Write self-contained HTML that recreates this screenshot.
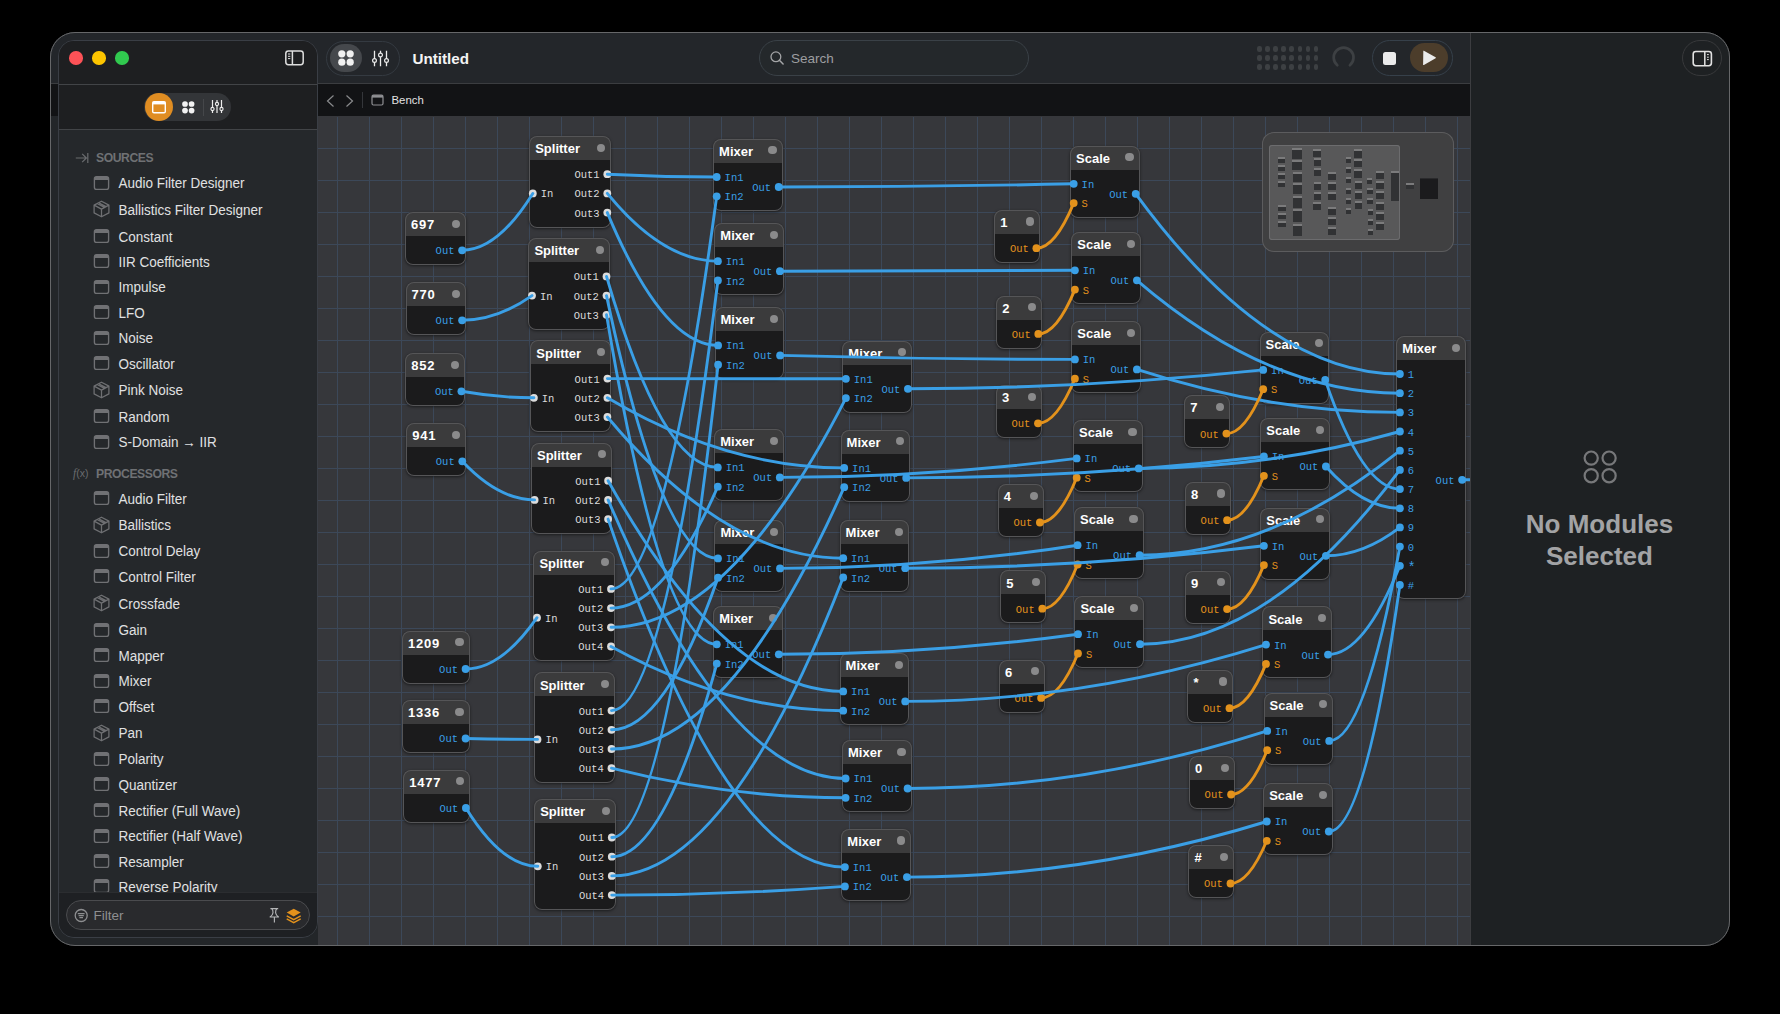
<!DOCTYPE html>
<html><head><meta charset="utf-8"><style>
*{margin:0;padding:0;box-sizing:border-box}
html,body{width:1780px;height:1014px;background:#000;overflow:hidden;font-family:"Liberation Sans",sans-serif}
.abs{position:absolute}
#win{position:absolute;left:50px;top:32px;width:1680px;height:913.5px;border-radius:25px;background:#232629;overflow:hidden}
#tb{position:absolute;left:0px;top:0px;width:1420px;height:52px;background:#23262a;border-bottom:1px solid #3b3d40}
#bc{position:absolute;left:0px;top:52px;width:1420px;height:32px;background:#121315}
#cv{position:absolute;left:318px;top:116px;width:1152px;height:829px;background-color:#36373b;overflow:hidden}
#grid{position:absolute;left:0;top:1px;width:1152px;height:828px;background-image:linear-gradient(to right,#3c4859 1px,transparent 1px),linear-gradient(to bottom,#3c4859 1px,transparent 1px);background-size:32px 32px;background-position:19px 31px}
#rp{position:absolute;left:1470px;top:32px;width:260px;height:913.5px;background:#1e2123;border-left:1px solid #3c3d40;border-top-right-radius:25px;border-bottom-right-radius:25px}
#frame{position:absolute;left:50px;top:32px;width:1680px;height:913.5px;border-radius:25px;border:1px solid #666769;pointer-events:none}
#sb{position:absolute;left:58px;top:40px;width:260px;height:897.5px;border-radius:16px;background:#25282b;border:1px solid #3a3e45;overflow:hidden}
#sbtop{position:absolute;left:0;top:0;width:100%;height:88px;background:#1e1f21}
.line{position:absolute;height:1px;background:#424447}
.tl{position:absolute;width:13.5px;height:13.5px;border-radius:50%;top:51.2px}
.it{position:absolute;left:94px;height:16px;width:215px;color:#e0e1e2;font-size:13.5px;line-height:16px;white-space:nowrap}
.it .ic{position:absolute;left:-1.2px}
.it span{position:absolute;left:24.5px;top:0;transform:scaleY(1.07);transform-origin:0 12.5px}
.sh{position:absolute;left:96px;color:#6f7174;font-size:12.2px;font-weight:bold;line-height:14px;letter-spacing:-0.45px}
.nd{position:absolute;border-radius:8px;background:#1b1b1c;box-shadow:0 1px 3px rgba(0,0,0,.5)}
.nd::after{content:"";position:absolute;left:0;top:0;right:0;bottom:0;border-radius:8px;box-shadow:inset 0 0 0 1px #555557}
.nd .hd{position:absolute;left:0;top:0;right:0;height:24px;background:#3b3b3c;border-radius:8px 8px 0 0}
.nd .tt{position:absolute;left:6px;top:5.2px;color:#fff;font-weight:bold;font-size:13px;line-height:16px}
.nd .tt.num{letter-spacing:0.8px}
.nd .hd i{position:absolute;right:6px;top:7.5px;width:8.2px;height:8.2px;border-radius:50%;background:#8a8a8b}
.pl,.pr{position:absolute;font-family:"Liberation Mono",monospace;font-size:10.5px;line-height:12px;transform:scaleY(1.12)}
.blue{color:#3a9fe6}.orange{color:#e3921c}.w{color:#dcdcdc}
#wires{position:absolute;left:0;top:0}
#wires path{fill:none;stroke-width:2.9;stroke-linecap:round}
#mm{position:absolute;left:1262px;top:132px;width:192px;height:120px;border-radius:12px;background:#404041;box-shadow:inset 0 0 0 1px #5c5c5e}
#mmv{position:absolute;left:6.7px;top:13.4px;width:131.3px;height:95px;border-radius:3px;background:#585859;box-shadow:inset 0 0 0 1px #6c6c6e}
.mn{position:absolute;background:#313234;border-top:2px solid #7b7b7c}
.led{position:absolute;width:4.4px;height:6.8px;border-radius:2.2px;background:#3d4043}
</style></head><body>
<div id="win"><div id="tb"></div><div id="bc"></div></div>
<div id="cv"><div id="grid"></div>
<div class="nd" style="left:87.0px;top:96.0px;width:61.0px;height:53.0px"><div class="hd"><span class="tt num">697</span><i></i></div><span class="pr blue" style="right:11.5px;top:33.3px">Out</span></div>
<div class="nd" style="left:87.5px;top:166.0px;width:60.5px;height:53.0px"><div class="hd"><span class="tt num">770</span><i></i></div><span class="pr blue" style="right:11.5px;top:33.3px">Out</span></div>
<div class="nd" style="left:87.3px;top:237.0px;width:60.0px;height:53.0px"><div class="hd"><span class="tt num">852</span><i></i></div><span class="pr blue" style="right:11.5px;top:33.3px">Out</span></div>
<div class="nd" style="left:88.2px;top:307.0px;width:60.0px;height:53.0px"><div class="hd"><span class="tt num">941</span><i></i></div><span class="pr blue" style="right:11.5px;top:33.3px">Out</span></div>
<div class="nd" style="left:84.0px;top:514.7px;width:67.5px;height:53.0px"><div class="hd"><span class="tt num">1209</span><i></i></div><span class="pr blue" style="right:11.5px;top:33.3px">Out</span></div>
<div class="nd" style="left:84.0px;top:584.2px;width:67.5px;height:53.0px"><div class="hd"><span class="tt num">1336</span><i></i></div><span class="pr blue" style="right:11.5px;top:33.3px">Out</span></div>
<div class="nd" style="left:85.2px;top:653.7px;width:66.6px;height:53.0px"><div class="hd"><span class="tt num">1477</span><i></i></div><span class="pr blue" style="right:11.5px;top:33.3px">Out</span></div>
<div class="nd" style="left:211.2px;top:20.0px;width:82.0px;height:91.6px"><div class="hd"><span class="tt">Splitter</span><i></i></div><span class="pl w" style="left:11.5px;top:52.4px">In</span><span class="pr w" style="right:11.5px;top:33.2px">Out1</span><span class="pr w" style="right:11.5px;top:52.4px">Out2</span><span class="pr w" style="right:11.5px;top:71.6px">Out3</span></div>
<div class="nd" style="left:210.4px;top:122.2px;width:82.0px;height:91.6px"><div class="hd"><span class="tt">Splitter</span><i></i></div><span class="pl w" style="left:11.5px;top:52.4px">In</span><span class="pr w" style="right:11.5px;top:33.2px">Out1</span><span class="pr w" style="right:11.5px;top:52.4px">Out2</span><span class="pr w" style="right:11.5px;top:71.6px">Out3</span></div>
<div class="nd" style="left:212.3px;top:224.4px;width:81.0px;height:91.6px"><div class="hd"><span class="tt">Splitter</span><i></i></div><span class="pl w" style="left:11.5px;top:52.4px">In</span><span class="pr w" style="right:11.5px;top:33.2px">Out1</span><span class="pr w" style="right:11.5px;top:52.4px">Out2</span><span class="pr w" style="right:11.5px;top:71.6px">Out3</span></div>
<div class="nd" style="left:213.0px;top:326.5px;width:81.0px;height:91.6px"><div class="hd"><span class="tt">Splitter</span><i></i></div><span class="pl w" style="left:11.5px;top:52.4px">In</span><span class="pr w" style="right:11.5px;top:33.2px">Out1</span><span class="pr w" style="right:11.5px;top:52.4px">Out2</span><span class="pr w" style="right:11.5px;top:71.6px">Out3</span></div>
<div class="nd" style="left:215.4px;top:434.7px;width:81.5px;height:110.8px"><div class="hd"><span class="tt">Splitter</span><i></i></div><span class="pl w" style="left:11.5px;top:62.0px">In</span><span class="pr w" style="right:11.5px;top:33.2px">Out1</span><span class="pr w" style="right:11.5px;top:52.4px">Out2</span><span class="pr w" style="right:11.5px;top:71.6px">Out3</span><span class="pr w" style="right:11.5px;top:90.8px">Out4</span></div>
<div class="nd" style="left:215.9px;top:556.4px;width:81.5px;height:110.8px"><div class="hd"><span class="tt">Splitter</span><i></i></div><span class="pl w" style="left:11.5px;top:62.0px">In</span><span class="pr w" style="right:11.5px;top:33.2px">Out1</span><span class="pr w" style="right:11.5px;top:52.4px">Out2</span><span class="pr w" style="right:11.5px;top:71.6px">Out3</span><span class="pr w" style="right:11.5px;top:90.8px">Out4</span></div>
<div class="nd" style="left:216.2px;top:683.3px;width:81.5px;height:110.8px"><div class="hd"><span class="tt">Splitter</span><i></i></div><span class="pl w" style="left:11.5px;top:62.0px">In</span><span class="pr w" style="right:11.5px;top:33.2px">Out1</span><span class="pr w" style="right:11.5px;top:52.4px">Out2</span><span class="pr w" style="right:11.5px;top:71.6px">Out3</span><span class="pr w" style="right:11.5px;top:90.8px">Out4</span></div>
<div class="nd" style="left:395.1px;top:22.8px;width:69.5px;height:72.0px"><div class="hd"><span class="tt">Mixer</span><i></i></div><span class="pl blue" style="left:11.5px;top:33.2px">In1</span><span class="pl blue" style="left:11.5px;top:52.5px">In2</span><span class="pr blue" style="right:11.5px;top:43.2px">Out</span></div>
<div class="nd" style="left:396.3px;top:107.0px;width:69.5px;height:72.0px"><div class="hd"><span class="tt">Mixer</span><i></i></div><span class="pl blue" style="left:11.5px;top:33.2px">In1</span><span class="pl blue" style="left:11.5px;top:52.5px">In2</span><span class="pr blue" style="right:11.5px;top:43.2px">Out</span></div>
<div class="nd" style="left:396.5px;top:191.2px;width:69.5px;height:72.0px"><div class="hd"><span class="tt">Mixer</span><i></i></div><span class="pl blue" style="left:11.5px;top:33.2px">In1</span><span class="pl blue" style="left:11.5px;top:52.5px">In2</span><span class="pr blue" style="right:11.5px;top:43.2px">Out</span></div>
<div class="nd" style="left:396.2px;top:313.2px;width:69.5px;height:72.0px"><div class="hd"><span class="tt">Mixer</span><i></i></div><span class="pl blue" style="left:11.5px;top:33.2px">In1</span><span class="pl blue" style="left:11.5px;top:52.5px">In2</span><span class="pr blue" style="right:11.5px;top:43.2px">Out</span></div>
<div class="nd" style="left:396.4px;top:404.2px;width:69.5px;height:72.0px"><div class="hd"><span class="tt">Mixer</span><i></i></div><span class="pl blue" style="left:11.5px;top:33.2px">In1</span><span class="pl blue" style="left:11.5px;top:52.5px">In2</span><span class="pr blue" style="right:11.5px;top:43.2px">Out</span></div>
<div class="nd" style="left:395.2px;top:490.1px;width:69.5px;height:72.0px"><div class="hd"><span class="tt">Mixer</span><i></i></div><span class="pl blue" style="left:11.5px;top:33.2px">In1</span><span class="pl blue" style="left:11.5px;top:52.5px">In2</span><span class="pr blue" style="right:11.5px;top:43.2px">Out</span></div>
<div class="nd" style="left:524.3px;top:224.6px;width:69.5px;height:72.0px"><div class="hd"><span class="tt">Mixer</span><i></i></div><span class="pl blue" style="left:11.5px;top:33.2px">In1</span><span class="pl blue" style="left:11.5px;top:52.5px">In2</span><span class="pr blue" style="right:11.5px;top:43.2px">Out</span></div>
<div class="nd" style="left:522.6px;top:313.7px;width:69.5px;height:72.0px"><div class="hd"><span class="tt">Mixer</span><i></i></div><span class="pl blue" style="left:11.5px;top:33.2px">In1</span><span class="pl blue" style="left:11.5px;top:52.5px">In2</span><span class="pr blue" style="right:11.5px;top:43.2px">Out</span></div>
<div class="nd" style="left:521.6px;top:404.0px;width:69.5px;height:72.0px"><div class="hd"><span class="tt">Mixer</span><i></i></div><span class="pl blue" style="left:11.5px;top:33.2px">In1</span><span class="pl blue" style="left:11.5px;top:52.5px">In2</span><span class="pr blue" style="right:11.5px;top:43.2px">Out</span></div>
<div class="nd" style="left:521.6px;top:537.2px;width:69.5px;height:72.0px"><div class="hd"><span class="tt">Mixer</span><i></i></div><span class="pl blue" style="left:11.5px;top:33.2px">In1</span><span class="pl blue" style="left:11.5px;top:52.5px">In2</span><span class="pr blue" style="right:11.5px;top:43.2px">Out</span></div>
<div class="nd" style="left:524.0px;top:624.3px;width:69.5px;height:72.0px"><div class="hd"><span class="tt">Mixer</span><i></i></div><span class="pl blue" style="left:11.5px;top:33.2px">In1</span><span class="pl blue" style="left:11.5px;top:52.5px">In2</span><span class="pr blue" style="right:11.5px;top:43.2px">Out</span></div>
<div class="nd" style="left:523.3px;top:712.9px;width:69.5px;height:72.0px"><div class="hd"><span class="tt">Mixer</span><i></i></div><span class="pl blue" style="left:11.5px;top:33.2px">In1</span><span class="pl blue" style="left:11.5px;top:52.5px">In2</span><span class="pr blue" style="right:11.5px;top:43.2px">Out</span></div>
<div class="nd" style="left:676.3px;top:93.9px;width:46.0px;height:53.0px"><div class="hd"><span class="tt">1</span><i></i></div><span class="pr orange" style="right:11.5px;top:33.3px">Out</span></div>
<div class="nd" style="left:678.2px;top:179.6px;width:46.0px;height:53.0px"><div class="hd"><span class="tt">2</span><i></i></div><span class="pr orange" style="right:11.5px;top:33.3px">Out</span></div>
<div class="nd" style="left:677.9px;top:269.0px;width:46.0px;height:53.0px"><div class="hd"><span class="tt">3</span><i></i></div><span class="pr orange" style="right:11.5px;top:33.3px">Out</span></div>
<div class="nd" style="left:679.8px;top:368.2px;width:46.0px;height:53.0px"><div class="hd"><span class="tt">4</span><i></i></div><span class="pr orange" style="right:11.5px;top:33.3px">Out</span></div>
<div class="nd" style="left:682.2px;top:454.4px;width:46.0px;height:53.0px"><div class="hd"><span class="tt">5</span><i></i></div><span class="pr orange" style="right:11.5px;top:33.3px">Out</span></div>
<div class="nd" style="left:681.0px;top:543.6px;width:46.0px;height:53.0px"><div class="hd"><span class="tt">6</span><i></i></div><span class="pr orange" style="right:11.5px;top:33.3px">Out</span></div>
<div class="nd" style="left:866.3px;top:279.3px;width:46.0px;height:53.0px"><div class="hd"><span class="tt">7</span><i></i></div><span class="pr orange" style="right:11.5px;top:33.3px">Out</span></div>
<div class="nd" style="left:867.0px;top:365.9px;width:46.0px;height:53.0px"><div class="hd"><span class="tt">8</span><i></i></div><span class="pr orange" style="right:11.5px;top:33.3px">Out</span></div>
<div class="nd" style="left:867.0px;top:454.8px;width:46.0px;height:53.0px"><div class="hd"><span class="tt">9</span><i></i></div><span class="pr orange" style="right:11.5px;top:33.3px">Out</span></div>
<div class="nd" style="left:869.4px;top:553.9px;width:46.0px;height:53.0px"><div class="hd"><span class="tt">*</span><i></i></div><span class="pr orange" style="right:11.5px;top:33.3px">Out</span></div>
<div class="nd" style="left:871.0px;top:640.2px;width:46.0px;height:53.0px"><div class="hd"><span class="tt">0</span><i></i></div><span class="pr orange" style="right:11.5px;top:33.3px">Out</span></div>
<div class="nd" style="left:870.4px;top:729.2px;width:46.0px;height:53.0px"><div class="hd"><span class="tt">#</span><i></i></div><span class="pr orange" style="right:11.5px;top:33.3px">Out</span></div>
<div class="nd" style="left:752.1px;top:29.6px;width:69.5px;height:72.0px"><div class="hd"><span class="tt">Scale</span><i></i></div><span class="pl blue" style="left:11.5px;top:33.2px">In</span><span class="pl orange" style="left:11.5px;top:52.5px">S</span><span class="pr blue" style="right:11.5px;top:43.2px">Out</span></div>
<div class="nd" style="left:753.3px;top:116.1px;width:69.5px;height:72.0px"><div class="hd"><span class="tt">Scale</span><i></i></div><span class="pl blue" style="left:11.5px;top:33.2px">In</span><span class="pl orange" style="left:11.5px;top:52.5px">S</span><span class="pr blue" style="right:11.5px;top:43.2px">Out</span></div>
<div class="nd" style="left:753.3px;top:205.2px;width:69.5px;height:72.0px"><div class="hd"><span class="tt">Scale</span><i></i></div><span class="pl blue" style="left:11.5px;top:33.2px">In</span><span class="pl orange" style="left:11.5px;top:52.5px">S</span><span class="pr blue" style="right:11.5px;top:43.2px">Out</span></div>
<div class="nd" style="left:755.1px;top:304.2px;width:69.5px;height:72.0px"><div class="hd"><span class="tt">Scale</span><i></i></div><span class="pl blue" style="left:11.5px;top:33.2px">In</span><span class="pl orange" style="left:11.5px;top:52.5px">S</span><span class="pr blue" style="right:11.5px;top:43.2px">Out</span></div>
<div class="nd" style="left:756.0px;top:391.0px;width:69.5px;height:72.0px"><div class="hd"><span class="tt">Scale</span><i></i></div><span class="pl blue" style="left:11.5px;top:33.2px">In</span><span class="pl orange" style="left:11.5px;top:52.5px">S</span><span class="pr blue" style="right:11.5px;top:43.2px">Out</span></div>
<div class="nd" style="left:756.4px;top:480.0px;width:69.5px;height:72.0px"><div class="hd"><span class="tt">Scale</span><i></i></div><span class="pl blue" style="left:11.5px;top:33.2px">In</span><span class="pl orange" style="left:11.5px;top:52.5px">S</span><span class="pr blue" style="right:11.5px;top:43.2px">Out</span></div>
<div class="nd" style="left:941.6px;top:215.7px;width:69.5px;height:72.0px"><div class="hd"><span class="tt">Scale</span><i></i></div><span class="pl blue" style="left:11.5px;top:33.2px">In</span><span class="pl orange" style="left:11.5px;top:52.5px">S</span><span class="pr blue" style="right:11.5px;top:43.2px">Out</span></div>
<div class="nd" style="left:942.3px;top:302.3px;width:69.5px;height:72.0px"><div class="hd"><span class="tt">Scale</span><i></i></div><span class="pl blue" style="left:11.5px;top:33.2px">In</span><span class="pl orange" style="left:11.5px;top:52.5px">S</span><span class="pr blue" style="right:11.5px;top:43.2px">Out</span></div>
<div class="nd" style="left:942.3px;top:391.6px;width:69.5px;height:72.0px"><div class="hd"><span class="tt">Scale</span><i></i></div><span class="pl blue" style="left:11.5px;top:33.2px">In</span><span class="pl orange" style="left:11.5px;top:52.5px">S</span><span class="pr blue" style="right:11.5px;top:43.2px">Out</span></div>
<div class="nd" style="left:944.4px;top:490.4px;width:69.5px;height:72.0px"><div class="hd"><span class="tt">Scale</span><i></i></div><span class="pl blue" style="left:11.5px;top:33.2px">In</span><span class="pl orange" style="left:11.5px;top:52.5px">S</span><span class="pr blue" style="right:11.5px;top:43.2px">Out</span></div>
<div class="nd" style="left:945.6px;top:576.7px;width:69.5px;height:72.0px"><div class="hd"><span class="tt">Scale</span><i></i></div><span class="pl blue" style="left:11.5px;top:33.2px">In</span><span class="pl orange" style="left:11.5px;top:52.5px">S</span><span class="pr blue" style="right:11.5px;top:43.2px">Out</span></div>
<div class="nd" style="left:945.2px;top:667.3px;width:69.5px;height:72.0px"><div class="hd"><span class="tt">Scale</span><i></i></div><span class="pl blue" style="left:11.5px;top:33.2px">In</span><span class="pl orange" style="left:11.5px;top:52.5px">S</span><span class="pr blue" style="right:11.5px;top:43.2px">Out</span></div>
<div class="nd" style="left:1078.3px;top:220.0px;width:69.7px;height:263.0px"><div class="hd"><span class="tt">Mixer</span><i></i></div><span class="pl blue" style="left:11.5px;top:33.0px">1</span><span class="pl blue" style="left:11.5px;top:52.2px">2</span><span class="pl blue" style="left:11.5px;top:71.4px">3</span><span class="pl blue" style="left:11.5px;top:90.5px">4</span><span class="pl blue" style="left:11.5px;top:109.7px">5</span><span class="pl blue" style="left:11.5px;top:128.9px">6</span><span class="pl blue" style="left:11.5px;top:148.1px">7</span><span class="pl blue" style="left:11.5px;top:167.3px">8</span><span class="pl blue" style="left:11.5px;top:186.4px">9</span><span class="pl blue" style="left:11.5px;top:205.6px">0</span><span class="pl blue" style="left:11.5px;top:227.0px;font-size:13px">*</span><span class="pl blue" style="left:11.5px;top:244.0px">#</span><span class="pr blue" style="right:11.5px;top:138.8px">Out</span></div>
<svg id="wires" width="1152" height="829">
<circle cx="144.1" cy="134.3" r="3.9" fill="#3a9fe6"/>
<circle cx="144.1" cy="204.3" r="3.9" fill="#3a9fe6"/>
<circle cx="143.4" cy="275.3" r="3.9" fill="#3a9fe6"/>
<circle cx="144.3" cy="345.3" r="3.9" fill="#3a9fe6"/>
<circle cx="147.6" cy="553.0" r="3.9" fill="#3a9fe6"/>
<circle cx="147.6" cy="622.5" r="3.9" fill="#3a9fe6"/>
<circle cx="147.9" cy="692.0" r="3.9" fill="#3a9fe6"/>
<circle cx="214.8" cy="77.4" r="3.9" fill="#dcdcdc"/>
<circle cx="289.3" cy="58.2" r="3.9" fill="#dcdcdc"/>
<circle cx="289.3" cy="77.4" r="3.9" fill="#dcdcdc"/>
<circle cx="289.3" cy="96.6" r="3.9" fill="#dcdcdc"/>
<circle cx="214.0" cy="179.6" r="3.9" fill="#dcdcdc"/>
<circle cx="288.5" cy="160.4" r="3.9" fill="#dcdcdc"/>
<circle cx="288.5" cy="179.6" r="3.9" fill="#dcdcdc"/>
<circle cx="288.5" cy="198.8" r="3.9" fill="#dcdcdc"/>
<circle cx="215.9" cy="281.8" r="3.9" fill="#dcdcdc"/>
<circle cx="289.4" cy="262.6" r="3.9" fill="#dcdcdc"/>
<circle cx="289.4" cy="281.8" r="3.9" fill="#dcdcdc"/>
<circle cx="289.4" cy="301.0" r="3.9" fill="#dcdcdc"/>
<circle cx="216.6" cy="383.9" r="3.9" fill="#dcdcdc"/>
<circle cx="290.1" cy="364.7" r="3.9" fill="#dcdcdc"/>
<circle cx="290.1" cy="383.9" r="3.9" fill="#dcdcdc"/>
<circle cx="290.1" cy="403.1" r="3.9" fill="#dcdcdc"/>
<circle cx="219.0" cy="501.7" r="3.9" fill="#dcdcdc"/>
<circle cx="293.0" cy="472.9" r="3.9" fill="#dcdcdc"/>
<circle cx="293.0" cy="492.1" r="3.9" fill="#dcdcdc"/>
<circle cx="293.0" cy="511.3" r="3.9" fill="#dcdcdc"/>
<circle cx="293.0" cy="530.5" r="3.9" fill="#dcdcdc"/>
<circle cx="219.5" cy="623.4" r="3.9" fill="#dcdcdc"/>
<circle cx="293.5" cy="594.6" r="3.9" fill="#dcdcdc"/>
<circle cx="293.5" cy="613.8" r="3.9" fill="#dcdcdc"/>
<circle cx="293.5" cy="633.0" r="3.9" fill="#dcdcdc"/>
<circle cx="293.5" cy="652.2" r="3.9" fill="#dcdcdc"/>
<circle cx="219.8" cy="750.3" r="3.9" fill="#dcdcdc"/>
<circle cx="293.8" cy="721.5" r="3.9" fill="#dcdcdc"/>
<circle cx="293.8" cy="740.7" r="3.9" fill="#dcdcdc"/>
<circle cx="293.8" cy="759.9" r="3.9" fill="#dcdcdc"/>
<circle cx="293.8" cy="779.1" r="3.9" fill="#dcdcdc"/>
<circle cx="398.7" cy="61.0" r="3.9" fill="#3a9fe6"/>
<circle cx="398.7" cy="80.3" r="3.9" fill="#3a9fe6"/>
<circle cx="460.7" cy="71.0" r="3.9" fill="#3a9fe6"/>
<circle cx="399.9" cy="145.2" r="3.9" fill="#3a9fe6"/>
<circle cx="399.9" cy="164.5" r="3.9" fill="#3a9fe6"/>
<circle cx="461.9" cy="155.2" r="3.9" fill="#3a9fe6"/>
<circle cx="400.1" cy="229.4" r="3.9" fill="#3a9fe6"/>
<circle cx="400.1" cy="248.7" r="3.9" fill="#3a9fe6"/>
<circle cx="462.1" cy="239.4" r="3.9" fill="#3a9fe6"/>
<circle cx="399.8" cy="351.4" r="3.9" fill="#3a9fe6"/>
<circle cx="399.8" cy="370.7" r="3.9" fill="#3a9fe6"/>
<circle cx="461.8" cy="361.4" r="3.9" fill="#3a9fe6"/>
<circle cx="400.0" cy="442.4" r="3.9" fill="#3a9fe6"/>
<circle cx="400.0" cy="461.7" r="3.9" fill="#3a9fe6"/>
<circle cx="462.0" cy="452.4" r="3.9" fill="#3a9fe6"/>
<circle cx="398.8" cy="528.3" r="3.9" fill="#3a9fe6"/>
<circle cx="398.8" cy="547.6" r="3.9" fill="#3a9fe6"/>
<circle cx="460.8" cy="538.3" r="3.9" fill="#3a9fe6"/>
<circle cx="527.9" cy="262.8" r="3.9" fill="#3a9fe6"/>
<circle cx="527.9" cy="282.1" r="3.9" fill="#3a9fe6"/>
<circle cx="589.9" cy="272.8" r="3.9" fill="#3a9fe6"/>
<circle cx="526.2" cy="351.9" r="3.9" fill="#3a9fe6"/>
<circle cx="526.2" cy="371.2" r="3.9" fill="#3a9fe6"/>
<circle cx="588.2" cy="361.9" r="3.9" fill="#3a9fe6"/>
<circle cx="525.2" cy="442.2" r="3.9" fill="#3a9fe6"/>
<circle cx="525.2" cy="461.5" r="3.9" fill="#3a9fe6"/>
<circle cx="587.2" cy="452.2" r="3.9" fill="#3a9fe6"/>
<circle cx="525.2" cy="575.4" r="3.9" fill="#3a9fe6"/>
<circle cx="525.2" cy="594.7" r="3.9" fill="#3a9fe6"/>
<circle cx="587.2" cy="585.4" r="3.9" fill="#3a9fe6"/>
<circle cx="527.6" cy="662.5" r="3.9" fill="#3a9fe6"/>
<circle cx="527.6" cy="681.8" r="3.9" fill="#3a9fe6"/>
<circle cx="589.6" cy="672.5" r="3.9" fill="#3a9fe6"/>
<circle cx="526.9" cy="751.1" r="3.9" fill="#3a9fe6"/>
<circle cx="526.9" cy="770.4" r="3.9" fill="#3a9fe6"/>
<circle cx="588.9" cy="761.1" r="3.9" fill="#3a9fe6"/>
<circle cx="718.4" cy="132.2" r="3.9" fill="#e3921c"/>
<circle cx="720.3" cy="217.9" r="3.9" fill="#e3921c"/>
<circle cx="720.0" cy="307.3" r="3.9" fill="#e3921c"/>
<circle cx="721.9" cy="406.5" r="3.9" fill="#e3921c"/>
<circle cx="724.3" cy="492.7" r="3.9" fill="#e3921c"/>
<circle cx="723.1" cy="581.9" r="3.9" fill="#e3921c"/>
<circle cx="908.4" cy="317.6" r="3.9" fill="#e3921c"/>
<circle cx="909.1" cy="404.2" r="3.9" fill="#e3921c"/>
<circle cx="909.1" cy="493.1" r="3.9" fill="#e3921c"/>
<circle cx="911.5" cy="592.2" r="3.9" fill="#e3921c"/>
<circle cx="913.1" cy="678.5" r="3.9" fill="#e3921c"/>
<circle cx="912.5" cy="767.5" r="3.9" fill="#e3921c"/>
<circle cx="755.7" cy="67.8" r="3.9" fill="#3a9fe6"/>
<circle cx="755.7" cy="87.1" r="3.9" fill="#e3921c"/>
<circle cx="817.7" cy="77.8" r="3.9" fill="#3a9fe6"/>
<circle cx="756.9" cy="154.3" r="3.9" fill="#3a9fe6"/>
<circle cx="756.9" cy="173.6" r="3.9" fill="#e3921c"/>
<circle cx="818.9" cy="164.3" r="3.9" fill="#3a9fe6"/>
<circle cx="756.9" cy="243.4" r="3.9" fill="#3a9fe6"/>
<circle cx="756.9" cy="262.7" r="3.9" fill="#e3921c"/>
<circle cx="818.9" cy="253.4" r="3.9" fill="#3a9fe6"/>
<circle cx="758.7" cy="342.4" r="3.9" fill="#3a9fe6"/>
<circle cx="758.7" cy="361.7" r="3.9" fill="#e3921c"/>
<circle cx="820.7" cy="352.4" r="3.9" fill="#3a9fe6"/>
<circle cx="759.6" cy="429.2" r="3.9" fill="#3a9fe6"/>
<circle cx="759.6" cy="448.5" r="3.9" fill="#e3921c"/>
<circle cx="821.6" cy="439.2" r="3.9" fill="#3a9fe6"/>
<circle cx="760.0" cy="518.2" r="3.9" fill="#3a9fe6"/>
<circle cx="760.0" cy="537.5" r="3.9" fill="#e3921c"/>
<circle cx="822.0" cy="528.2" r="3.9" fill="#3a9fe6"/>
<circle cx="945.2" cy="253.9" r="3.9" fill="#3a9fe6"/>
<circle cx="945.2" cy="273.2" r="3.9" fill="#e3921c"/>
<circle cx="1007.2" cy="263.9" r="3.9" fill="#3a9fe6"/>
<circle cx="945.9" cy="340.5" r="3.9" fill="#3a9fe6"/>
<circle cx="945.9" cy="359.8" r="3.9" fill="#e3921c"/>
<circle cx="1007.9" cy="350.5" r="3.9" fill="#3a9fe6"/>
<circle cx="945.9" cy="429.8" r="3.9" fill="#3a9fe6"/>
<circle cx="945.9" cy="449.1" r="3.9" fill="#e3921c"/>
<circle cx="1007.9" cy="439.8" r="3.9" fill="#3a9fe6"/>
<circle cx="948.0" cy="528.6" r="3.9" fill="#3a9fe6"/>
<circle cx="948.0" cy="547.9" r="3.9" fill="#e3921c"/>
<circle cx="1010.0" cy="538.6" r="3.9" fill="#3a9fe6"/>
<circle cx="949.2" cy="614.9" r="3.9" fill="#3a9fe6"/>
<circle cx="949.2" cy="634.2" r="3.9" fill="#e3921c"/>
<circle cx="1011.2" cy="624.9" r="3.9" fill="#3a9fe6"/>
<circle cx="948.8" cy="705.5" r="3.9" fill="#3a9fe6"/>
<circle cx="948.8" cy="724.8" r="3.9" fill="#e3921c"/>
<circle cx="1010.8" cy="715.5" r="3.9" fill="#3a9fe6"/>
<circle cx="1081.9" cy="258.0" r="3.9" fill="#3a9fe6"/>
<circle cx="1081.9" cy="277.2" r="3.9" fill="#3a9fe6"/>
<circle cx="1081.9" cy="296.4" r="3.9" fill="#3a9fe6"/>
<circle cx="1081.9" cy="315.5" r="3.9" fill="#3a9fe6"/>
<circle cx="1081.9" cy="334.7" r="3.9" fill="#3a9fe6"/>
<circle cx="1081.9" cy="353.9" r="3.9" fill="#3a9fe6"/>
<circle cx="1081.9" cy="373.1" r="3.9" fill="#3a9fe6"/>
<circle cx="1081.9" cy="392.3" r="3.9" fill="#3a9fe6"/>
<circle cx="1081.9" cy="411.4" r="3.9" fill="#3a9fe6"/>
<circle cx="1081.9" cy="430.6" r="3.9" fill="#3a9fe6"/>
<circle cx="1081.9" cy="449.8" r="3.9" fill="#3a9fe6"/>
<circle cx="1081.9" cy="469.0" r="3.9" fill="#3a9fe6"/>
<circle cx="1144.1" cy="363.8" r="3.9" fill="#3a9fe6"/>
<path d="M1144.5 363.8H1160" stroke="#3a9fe6"/>
<path d="M144.1 134.3Q179.5 134.3 214.8 77.4" stroke="#3a9fe6"/>
<path d="M144.1 204.3Q179.1 204.3 214.0 179.6" stroke="#3a9fe6"/>
<path d="M143.4 275.3Q179.6 281.8 215.9 281.8" stroke="#3a9fe6"/>
<path d="M144.3 345.3Q180.5 383.9 216.6 383.9" stroke="#3a9fe6"/>
<path d="M147.6 553.0Q183.3 553.0 219.0 501.7" stroke="#3a9fe6"/>
<path d="M147.6 622.5Q183.6 623.4 219.5 623.4" stroke="#3a9fe6"/>
<path d="M147.9 692.0Q183.9 750.3 219.8 750.3" stroke="#3a9fe6"/>
<path d="M289.3 58.2Q344.0 61.0 398.7 61.0" stroke="#3a9fe6"/>
<path d="M289.3 77.4Q344.6 145.2 399.9 145.2" stroke="#3a9fe6"/>
<path d="M289.3 96.6Q344.7 229.4 400.1 229.4" stroke="#3a9fe6"/>
<path d="M288.5 160.4Q344.2 351.4 399.8 351.4" stroke="#3a9fe6"/>
<path d="M288.5 179.6Q344.2 442.4 400.0 442.4" stroke="#3a9fe6"/>
<path d="M288.5 198.8Q343.7 528.3 398.8 528.3" stroke="#3a9fe6"/>
<path d="M289.4 262.6Q408.6 262.8 527.9 262.8" stroke="#3a9fe6"/>
<path d="M289.4 281.8Q407.8 351.9 526.2 351.9" stroke="#3a9fe6"/>
<path d="M289.4 301.0Q407.3 442.2 525.2 442.2" stroke="#3a9fe6"/>
<path d="M290.1 364.7Q407.7 575.4 525.2 575.4" stroke="#3a9fe6"/>
<path d="M290.1 383.9Q408.9 662.5 527.6 662.5" stroke="#3a9fe6"/>
<path d="M290.1 403.1Q408.5 751.1 526.9 751.1" stroke="#3a9fe6"/>
<path d="M293.0 472.9Q345.9 472.9 398.7 80.3" stroke="#3a9fe6"/>
<path d="M293.0 492.1Q346.4 492.1 399.8 370.7" stroke="#3a9fe6"/>
<path d="M293.0 511.3Q410.5 511.3 527.9 282.1" stroke="#3a9fe6"/>
<path d="M293.0 530.5Q409.1 594.7 525.2 594.7" stroke="#3a9fe6"/>
<path d="M293.5 594.6Q346.7 594.6 399.9 164.5" stroke="#3a9fe6"/>
<path d="M293.5 613.8Q346.8 613.8 400.0 461.7" stroke="#3a9fe6"/>
<path d="M293.5 633.0Q409.9 633.0 526.2 371.2" stroke="#3a9fe6"/>
<path d="M293.5 652.2Q410.5 681.8 527.6 681.8" stroke="#3a9fe6"/>
<path d="M293.8 721.5Q347.0 721.5 400.1 248.7" stroke="#3a9fe6"/>
<path d="M293.8 740.7Q346.3 740.7 398.8 547.6" stroke="#3a9fe6"/>
<path d="M293.8 759.9Q409.5 759.9 525.2 461.5" stroke="#3a9fe6"/>
<path d="M293.8 779.1Q410.4 779.1 526.9 770.4" stroke="#3a9fe6"/>
<path d="M460.7 71.0Q608.2 71.0 755.7 67.8" stroke="#3a9fe6"/>
<path d="M718.4 132.2Q737.0 132.2 755.7 87.1" stroke="#e3921c"/>
<path d="M817.7 77.8Q949.8 258.0 1081.9 258.0" stroke="#3a9fe6"/>
<path d="M461.9 155.2Q609.4 155.2 756.9 154.3" stroke="#3a9fe6"/>
<path d="M720.3 217.9Q738.6 217.9 756.9 173.6" stroke="#e3921c"/>
<path d="M818.9 164.3Q950.4 277.2 1081.9 277.2" stroke="#3a9fe6"/>
<path d="M462.1 239.4Q609.5 243.4 756.9 243.4" stroke="#3a9fe6"/>
<path d="M720.0 307.3Q738.4 307.3 756.9 262.7" stroke="#e3921c"/>
<path d="M818.9 253.4Q950.4 296.4 1081.9 296.4" stroke="#3a9fe6"/>
<path d="M461.8 361.4Q610.2 361.4 758.7 342.4" stroke="#3a9fe6"/>
<path d="M721.9 406.5Q740.3 406.5 758.7 361.7" stroke="#e3921c"/>
<path d="M820.7 352.4Q951.3 352.4 1081.9 315.5" stroke="#3a9fe6"/>
<path d="M462.0 452.4Q610.8 452.4 759.6 429.2" stroke="#3a9fe6"/>
<path d="M724.3 492.7Q741.9 492.7 759.6 448.5" stroke="#e3921c"/>
<path d="M821.6 439.2Q951.8 439.2 1081.9 334.7" stroke="#3a9fe6"/>
<path d="M460.8 538.3Q610.4 538.3 760.0 518.2" stroke="#3a9fe6"/>
<path d="M723.1 581.9Q741.5 581.9 760.0 537.5" stroke="#e3921c"/>
<path d="M822.0 528.2Q951.9 528.2 1081.9 353.9" stroke="#3a9fe6"/>
<path d="M589.9 272.8Q767.5 272.8 945.2 253.9" stroke="#3a9fe6"/>
<path d="M908.4 317.6Q926.8 317.6 945.2 273.2" stroke="#e3921c"/>
<path d="M1007.2 263.9Q1044.5 373.1 1081.9 373.1" stroke="#3a9fe6"/>
<path d="M588.2 361.9Q767.0 361.9 945.9 340.5" stroke="#3a9fe6"/>
<path d="M909.1 404.2Q927.5 404.2 945.9 359.8" stroke="#e3921c"/>
<path d="M1007.9 350.5Q1044.9 392.3 1081.9 392.3" stroke="#3a9fe6"/>
<path d="M587.2 452.2Q766.5 452.2 945.9 429.8" stroke="#3a9fe6"/>
<path d="M909.1 493.1Q927.5 493.1 945.9 449.1" stroke="#e3921c"/>
<path d="M1007.9 439.8Q1044.9 439.8 1081.9 411.4" stroke="#3a9fe6"/>
<path d="M587.2 585.4Q767.6 585.4 948.0 528.6" stroke="#3a9fe6"/>
<path d="M911.5 592.2Q929.8 592.2 948.0 547.9" stroke="#e3921c"/>
<path d="M1010.0 538.6Q1045.9 538.6 1081.9 449.8" stroke="#3a9fe6"/>
<path d="M589.6 672.5Q769.4 672.5 949.2 614.9" stroke="#3a9fe6"/>
<path d="M913.1 678.5Q931.1 678.5 949.2 634.2" stroke="#e3921c"/>
<path d="M1011.2 624.9Q1046.5 624.9 1081.9 430.6" stroke="#3a9fe6"/>
<path d="M588.9 761.1Q768.8 761.1 948.8 705.5" stroke="#3a9fe6"/>
<path d="M912.5 767.5Q930.7 767.5 948.8 724.8" stroke="#e3921c"/>
<path d="M1010.8 715.5Q1046.3 715.5 1081.9 469.0" stroke="#3a9fe6"/>
</svg>
<div id="mm" style="left:944px;top:16px"><div id="mmv"></div><div class="mn" style="left:16.2px;top:25.0px;width:7.0px;height:6.0px"></div><div class="mn" style="left:16.3px;top:33.0px;width:6.9px;height:6.0px"></div><div class="mn" style="left:16.2px;top:41.0px;width:6.9px;height:6.0px"></div><div class="mn" style="left:16.3px;top:49.0px;width:6.9px;height:6.0px"></div><div class="mn" style="left:15.9px;top:72.6px;width:7.7px;height:6.0px"></div><div class="mn" style="left:15.9px;top:80.6px;width:7.7px;height:6.0px"></div><div class="mn" style="left:16.0px;top:88.5px;width:7.6px;height:6.0px"></div><div class="mn" style="left:30.4px;top:16.4px;width:9.4px;height:10.4px"></div><div class="mn" style="left:30.3px;top:28.0px;width:9.4px;height:10.4px"></div><div class="mn" style="left:30.5px;top:39.6px;width:9.3px;height:10.4px"></div><div class="mn" style="left:30.6px;top:51.2px;width:9.3px;height:10.4px"></div><div class="mn" style="left:30.9px;top:63.5px;width:9.3px;height:12.6px"></div><div class="mn" style="left:30.9px;top:77.4px;width:9.3px;height:12.6px"></div><div class="mn" style="left:31.0px;top:91.8px;width:9.3px;height:12.6px"></div><div class="mn" style="left:51.4px;top:16.7px;width:7.9px;height:8.2px"></div><div class="mn" style="left:51.5px;top:26.3px;width:7.9px;height:8.2px"></div><div class="mn" style="left:51.5px;top:35.8px;width:7.9px;height:8.2px"></div><div class="mn" style="left:51.5px;top:49.7px;width:7.9px;height:8.2px"></div><div class="mn" style="left:51.5px;top:60.1px;width:7.9px;height:8.2px"></div><div class="mn" style="left:51.4px;top:69.8px;width:7.9px;height:8.2px"></div><div class="mn" style="left:66.1px;top:39.6px;width:7.9px;height:8.2px"></div><div class="mn" style="left:65.9px;top:49.8px;width:7.9px;height:8.2px"></div><div class="mn" style="left:65.8px;top:60.1px;width:7.9px;height:8.2px"></div><div class="mn" style="left:65.8px;top:75.2px;width:7.9px;height:8.2px"></div><div class="mn" style="left:66.1px;top:85.1px;width:7.9px;height:8.2px"></div><div class="mn" style="left:66.0px;top:95.2px;width:7.9px;height:8.2px"></div><div class="mn" style="left:83.5px;top:24.8px;width:5.3px;height:6.0px"></div><div class="mn" style="left:83.7px;top:34.5px;width:5.3px;height:6.0px"></div><div class="mn" style="left:83.7px;top:44.7px;width:5.3px;height:6.0px"></div><div class="mn" style="left:83.9px;top:56.0px;width:5.3px;height:6.0px"></div><div class="mn" style="left:84.2px;top:65.8px;width:5.3px;height:6.0px"></div><div class="mn" style="left:84.0px;top:75.9px;width:5.3px;height:6.0px"></div><div class="mn" style="left:105.2px;top:45.9px;width:5.3px;height:6.0px"></div><div class="mn" style="left:105.3px;top:55.7px;width:5.3px;height:6.0px"></div><div class="mn" style="left:105.3px;top:65.8px;width:5.3px;height:6.0px"></div><div class="mn" style="left:105.6px;top:77.1px;width:5.3px;height:6.0px"></div><div class="mn" style="left:105.7px;top:86.9px;width:5.3px;height:6.0px"></div><div class="mn" style="left:105.7px;top:97.1px;width:5.3px;height:6.0px"></div><div class="mn" style="left:92.2px;top:17.4px;width:7.9px;height:8.2px"></div><div class="mn" style="left:92.3px;top:27.3px;width:7.9px;height:8.2px"></div><div class="mn" style="left:92.3px;top:37.4px;width:7.9px;height:8.2px"></div><div class="mn" style="left:92.5px;top:48.7px;width:7.9px;height:8.2px"></div><div class="mn" style="left:92.6px;top:58.6px;width:7.9px;height:8.2px"></div><div class="mn" style="left:92.6px;top:68.7px;width:7.9px;height:8.2px"></div><div class="mn" style="left:113.8px;top:38.6px;width:7.9px;height:8.2px"></div><div class="mn" style="left:113.9px;top:48.5px;width:7.9px;height:8.2px"></div><div class="mn" style="left:113.9px;top:58.6px;width:7.9px;height:8.2px"></div><div class="mn" style="left:114.1px;top:69.9px;width:7.9px;height:8.2px"></div><div class="mn" style="left:114.3px;top:79.7px;width:7.9px;height:8.2px"></div><div class="mn" style="left:114.2px;top:90.0px;width:7.9px;height:8.2px"></div><div class="mn" style="left:129.4px;top:39.1px;width:8.0px;height:29.9px"></div><div class="mn" style="left:144px;top:51px;width:8px;height:6px"></div><div class="abs" style="left:158px;top:46px;width:18px;height:21.4px;background:#1b1b1d;border-top:1px solid #2a2a2c"></div></div>
</div>
<div id="rp"></div>
<div id="sb">
 <div id="sbtop"></div>
 <div class="line" style="left:0;top:43px;width:100%"></div>
 <div class="line" style="left:0;top:88px;width:100%"></div>
</div>
<div class="it" style="top:176.3px"><svg class="ic" style="top:-1.6px" width="17" height="16" viewBox="0 0 17 16"><rect x="1.4" y="1.6" width="14.2" height="12.8" rx="2.2" fill="none" stroke="#707174" stroke-width="1.35"/><path d="M1.4 3.8Q1.4 1.6 3.6 1.6H13.4Q15.6 1.6 15.6 3.8V5H1.4Z" fill="#707174"/></svg><span>Audio Filter Designer</span></div><div class="it" style="top:202.9px"><svg class="ic" style="top:-2.7px" width="17" height="18" viewBox="0 0 17 18"><path d="M8.5 1.2L15.9 5.1V12.9L8.5 16.8L1.1 12.9V5.1Z M1.6 5.4L8.5 9.1L15.4 5.4 M8.5 9.1V16.5 M4.1 3.5L11.5 7.4 M5.6 2.7L13 6.6" fill="none" stroke="#6f7073" stroke-width="1.25" stroke-linejoin="round"/></svg><span>Ballistics Filter Designer</span></div><div class="it" style="top:229.5px"><svg class="ic" style="top:-1.6px" width="17" height="16" viewBox="0 0 17 16"><rect x="1.4" y="1.6" width="14.2" height="12.8" rx="2.2" fill="none" stroke="#707174" stroke-width="1.35"/><path d="M1.4 3.8Q1.4 1.6 3.6 1.6H13.4Q15.6 1.6 15.6 3.8V5H1.4Z" fill="#707174"/></svg><span>Constant</span></div><div class="it" style="top:255.0px"><svg class="ic" style="top:-1.6px" width="17" height="16" viewBox="0 0 17 16"><rect x="1.4" y="1.6" width="14.2" height="12.8" rx="2.2" fill="none" stroke="#707174" stroke-width="1.35"/><path d="M1.4 3.8Q1.4 1.6 3.6 1.6H13.4Q15.6 1.6 15.6 3.8V5H1.4Z" fill="#707174"/></svg><span>IIR Coefficients</span></div><div class="it" style="top:280.3px"><svg class="ic" style="top:-1.6px" width="17" height="16" viewBox="0 0 17 16"><rect x="1.4" y="1.6" width="14.2" height="12.8" rx="2.2" fill="none" stroke="#707174" stroke-width="1.35"/><path d="M1.4 3.8Q1.4 1.6 3.6 1.6H13.4Q15.6 1.6 15.6 3.8V5H1.4Z" fill="#707174"/></svg><span>Impulse</span></div><div class="it" style="top:305.8px"><svg class="ic" style="top:-1.6px" width="17" height="16" viewBox="0 0 17 16"><rect x="1.4" y="1.6" width="14.2" height="12.8" rx="2.2" fill="none" stroke="#707174" stroke-width="1.35"/><path d="M1.4 3.8Q1.4 1.6 3.6 1.6H13.4Q15.6 1.6 15.6 3.8V5H1.4Z" fill="#707174"/></svg><span>LFO</span></div><div class="it" style="top:331.2px"><svg class="ic" style="top:-1.6px" width="17" height="16" viewBox="0 0 17 16"><rect x="1.4" y="1.6" width="14.2" height="12.8" rx="2.2" fill="none" stroke="#707174" stroke-width="1.35"/><path d="M1.4 3.8Q1.4 1.6 3.6 1.6H13.4Q15.6 1.6 15.6 3.8V5H1.4Z" fill="#707174"/></svg><span>Noise</span></div><div class="it" style="top:356.6px"><svg class="ic" style="top:-1.6px" width="17" height="16" viewBox="0 0 17 16"><rect x="1.4" y="1.6" width="14.2" height="12.8" rx="2.2" fill="none" stroke="#707174" stroke-width="1.35"/><path d="M1.4 3.8Q1.4 1.6 3.6 1.6H13.4Q15.6 1.6 15.6 3.8V5H1.4Z" fill="#707174"/></svg><span>Oscillator</span></div><div class="it" style="top:383.3px"><svg class="ic" style="top:-2.7px" width="17" height="18" viewBox="0 0 17 18"><path d="M8.5 1.2L15.9 5.1V12.9L8.5 16.8L1.1 12.9V5.1Z M1.6 5.4L8.5 9.1L15.4 5.4 M8.5 9.1V16.5 M4.1 3.5L11.5 7.4 M5.6 2.7L13 6.6" fill="none" stroke="#6f7073" stroke-width="1.25" stroke-linejoin="round"/></svg><span>Pink Noise</span></div><div class="it" style="top:410.0px"><svg class="ic" style="top:-1.6px" width="17" height="16" viewBox="0 0 17 16"><rect x="1.4" y="1.6" width="14.2" height="12.8" rx="2.2" fill="none" stroke="#707174" stroke-width="1.35"/><path d="M1.4 3.8Q1.4 1.6 3.6 1.6H13.4Q15.6 1.6 15.6 3.8V5H1.4Z" fill="#707174"/></svg><span>Random</span></div><div class="it" style="top:435.3px"><svg class="ic" style="top:-1.6px" width="17" height="16" viewBox="0 0 17 16"><rect x="1.4" y="1.6" width="14.2" height="12.8" rx="2.2" fill="none" stroke="#707174" stroke-width="1.35"/><path d="M1.4 3.8Q1.4 1.6 3.6 1.6H13.4Q15.6 1.6 15.6 3.8V5H1.4Z" fill="#707174"/></svg><span>S-Domain → IIR</span></div><div class="it" style="top:491.7px"><svg class="ic" style="top:-1.6px" width="17" height="16" viewBox="0 0 17 16"><rect x="1.4" y="1.6" width="14.2" height="12.8" rx="2.2" fill="none" stroke="#707174" stroke-width="1.35"/><path d="M1.4 3.8Q1.4 1.6 3.6 1.6H13.4Q15.6 1.6 15.6 3.8V5H1.4Z" fill="#707174"/></svg><span>Audio Filter</span></div><div class="it" style="top:518.3px"><svg class="ic" style="top:-2.7px" width="17" height="18" viewBox="0 0 17 18"><path d="M8.5 1.2L15.9 5.1V12.9L8.5 16.8L1.1 12.9V5.1Z M1.6 5.4L8.5 9.1L15.4 5.4 M8.5 9.1V16.5 M4.1 3.5L11.5 7.4 M5.6 2.7L13 6.6" fill="none" stroke="#6f7073" stroke-width="1.25" stroke-linejoin="round"/></svg><span>Ballistics</span></div><div class="it" style="top:544.4px"><svg class="ic" style="top:-1.6px" width="17" height="16" viewBox="0 0 17 16"><rect x="1.4" y="1.6" width="14.2" height="12.8" rx="2.2" fill="none" stroke="#707174" stroke-width="1.35"/><path d="M1.4 3.8Q1.4 1.6 3.6 1.6H13.4Q15.6 1.6 15.6 3.8V5H1.4Z" fill="#707174"/></svg><span>Control Delay</span></div><div class="it" style="top:569.7px"><svg class="ic" style="top:-1.6px" width="17" height="16" viewBox="0 0 17 16"><rect x="1.4" y="1.6" width="14.2" height="12.8" rx="2.2" fill="none" stroke="#707174" stroke-width="1.35"/><path d="M1.4 3.8Q1.4 1.6 3.6 1.6H13.4Q15.6 1.6 15.6 3.8V5H1.4Z" fill="#707174"/></svg><span>Control Filter</span></div><div class="it" style="top:596.6px"><svg class="ic" style="top:-2.7px" width="17" height="18" viewBox="0 0 17 18"><path d="M8.5 1.2L15.9 5.1V12.9L8.5 16.8L1.1 12.9V5.1Z M1.6 5.4L8.5 9.1L15.4 5.4 M8.5 9.1V16.5 M4.1 3.5L11.5 7.4 M5.6 2.7L13 6.6" fill="none" stroke="#6f7073" stroke-width="1.25" stroke-linejoin="round"/></svg><span>Crossfade</span></div><div class="it" style="top:623.2px"><svg class="ic" style="top:-1.6px" width="17" height="16" viewBox="0 0 17 16"><rect x="1.4" y="1.6" width="14.2" height="12.8" rx="2.2" fill="none" stroke="#707174" stroke-width="1.35"/><path d="M1.4 3.8Q1.4 1.6 3.6 1.6H13.4Q15.6 1.6 15.6 3.8V5H1.4Z" fill="#707174"/></svg><span>Gain</span></div><div class="it" style="top:648.8px"><svg class="ic" style="top:-1.6px" width="17" height="16" viewBox="0 0 17 16"><rect x="1.4" y="1.6" width="14.2" height="12.8" rx="2.2" fill="none" stroke="#707174" stroke-width="1.35"/><path d="M1.4 3.8Q1.4 1.6 3.6 1.6H13.4Q15.6 1.6 15.6 3.8V5H1.4Z" fill="#707174"/></svg><span>Mapper</span></div><div class="it" style="top:674.1px"><svg class="ic" style="top:-1.6px" width="17" height="16" viewBox="0 0 17 16"><rect x="1.4" y="1.6" width="14.2" height="12.8" rx="2.2" fill="none" stroke="#707174" stroke-width="1.35"/><path d="M1.4 3.8Q1.4 1.6 3.6 1.6H13.4Q15.6 1.6 15.6 3.8V5H1.4Z" fill="#707174"/></svg><span>Mixer</span></div><div class="it" style="top:699.7px"><svg class="ic" style="top:-1.6px" width="17" height="16" viewBox="0 0 17 16"><rect x="1.4" y="1.6" width="14.2" height="12.8" rx="2.2" fill="none" stroke="#707174" stroke-width="1.35"/><path d="M1.4 3.8Q1.4 1.6 3.6 1.6H13.4Q15.6 1.6 15.6 3.8V5H1.4Z" fill="#707174"/></svg><span>Offset</span></div><div class="it" style="top:726.3px"><svg class="ic" style="top:-2.7px" width="17" height="18" viewBox="0 0 17 18"><path d="M8.5 1.2L15.9 5.1V12.9L8.5 16.8L1.1 12.9V5.1Z M1.6 5.4L8.5 9.1L15.4 5.4 M8.5 9.1V16.5 M4.1 3.5L11.5 7.4 M5.6 2.7L13 6.6" fill="none" stroke="#6f7073" stroke-width="1.25" stroke-linejoin="round"/></svg><span>Pan</span></div><div class="it" style="top:752.4px"><svg class="ic" style="top:-1.6px" width="17" height="16" viewBox="0 0 17 16"><rect x="1.4" y="1.6" width="14.2" height="12.8" rx="2.2" fill="none" stroke="#707174" stroke-width="1.35"/><path d="M1.4 3.8Q1.4 1.6 3.6 1.6H13.4Q15.6 1.6 15.6 3.8V5H1.4Z" fill="#707174"/></svg><span>Polarity</span></div><div class="it" style="top:777.6px"><svg class="ic" style="top:-1.6px" width="17" height="16" viewBox="0 0 17 16"><rect x="1.4" y="1.6" width="14.2" height="12.8" rx="2.2" fill="none" stroke="#707174" stroke-width="1.35"/><path d="M1.4 3.8Q1.4 1.6 3.6 1.6H13.4Q15.6 1.6 15.6 3.8V5H1.4Z" fill="#707174"/></svg><span>Quantizer</span></div><div class="it" style="top:803.6px"><svg class="ic" style="top:-1.6px" width="17" height="16" viewBox="0 0 17 16"><rect x="1.4" y="1.6" width="14.2" height="12.8" rx="2.2" fill="none" stroke="#707174" stroke-width="1.35"/><path d="M1.4 3.8Q1.4 1.6 3.6 1.6H13.4Q15.6 1.6 15.6 3.8V5H1.4Z" fill="#707174"/></svg><span>Rectifier (Full Wave)</span></div><div class="it" style="top:829.3px"><svg class="ic" style="top:-1.6px" width="17" height="16" viewBox="0 0 17 16"><rect x="1.4" y="1.6" width="14.2" height="12.8" rx="2.2" fill="none" stroke="#707174" stroke-width="1.35"/><path d="M1.4 3.8Q1.4 1.6 3.6 1.6H13.4Q15.6 1.6 15.6 3.8V5H1.4Z" fill="#707174"/></svg><span>Rectifier (Half Wave)</span></div><div class="it" style="top:854.8px"><svg class="ic" style="top:-1.6px" width="17" height="16" viewBox="0 0 17 16"><rect x="1.4" y="1.6" width="14.2" height="12.8" rx="2.2" fill="none" stroke="#707174" stroke-width="1.35"/><path d="M1.4 3.8Q1.4 1.6 3.6 1.6H13.4Q15.6 1.6 15.6 3.8V5H1.4Z" fill="#707174"/></svg><span>Resampler</span></div><div class="it" style="top:880.0px"><svg class="ic" style="top:-1.6px" width="17" height="16" viewBox="0 0 17 16"><rect x="1.4" y="1.6" width="14.2" height="12.8" rx="2.2" fill="none" stroke="#707174" stroke-width="1.35"/><path d="M1.4 3.8Q1.4 1.6 3.6 1.6H13.4Q15.6 1.6 15.6 3.8V5H1.4Z" fill="#707174"/></svg><span>Reverse Polarity</span></div>
<div class="abs" style="left:59px;top:892px;width:258px;height:44.5px;background:#1e2023;border-top:1px solid #2b2d30;border-radius:0 0 15px 15px"></div>
<!-- filter field -->
<div class="abs" style="left:65.5px;top:900.4px;width:244.5px;height:29.8px;border-radius:15px;background:#292a2d;border:1px solid #4a4b4e"></div>
<svg class="abs" style="left:73px;top:907px" width="18" height="18" viewBox="0 0 18 18"><circle cx="8.2" cy="8.5" r="6" fill="none" stroke="#8d8e90" stroke-width="1.3"/><path d="M4.8 6.6h6.8M5.6 8.6h5.2M6.4 10.6h3.6" stroke="#8d8e90" stroke-width="1.2"/></svg>
<div class="abs" style="left:93.6px;top:908px;color:#8e8f91;font-size:13.5px;line-height:16px">Filter</div>
<svg class="abs" style="left:266px;top:906px" width="17" height="20" viewBox="0 0 17 20"><path d="M4.4 2.6h7.8M5.6 2.6q1.6 1.2 1.4 4.2q-0.3 2.4-2.9 4.2h8.4q-2.6-1.8-2.9-4.2q-0.2-3 1.4-4.2M8.4 11v5.6" fill="none" stroke="#b4b5b7" stroke-width="1.15" stroke-linejoin="round"/></svg>
<svg class="abs" style="left:285px;top:907px" width="18" height="18" viewBox="0 0 18 18"><path d="M8.7 1.8l7 3.8-7 3.8-7-3.8z" fill="#e3921c"/><path d="M1.7 8.9l7 3.8 7-3.8M1.7 11.9l7 3.8 7-3.8" fill="none" stroke="#e3921c" stroke-width="1.4"/></svg>
<!-- traffic lights -->
<div class="tl" style="left:69px;background:#fd5257"></div>
<div class="tl" style="left:92.2px;background:#fdc500"></div>
<div class="tl" style="left:115.1px;background:#31c94f"></div>
<!-- sidebar toggle -->
<svg class="abs" style="left:284px;top:49px" width="21" height="18" viewBox="0 0 21 18"><rect x="1.8" y="1.9" width="17.4" height="13.8" rx="2.6" fill="none" stroke="#dedede" stroke-width="1.5"/><path d="M8.4 2v13.6" stroke="#dedede" stroke-width="1.5"/><path d="M4 5h2.3M4 7.3h2.3M4 9.6h2.3" stroke="#dedede" stroke-width="1"/></svg>
<!-- sidebar segmented -->
<div class="abs" style="left:144.4px;top:92.9px;width:86.5px;height:28px;border-radius:14px;background:#333538"></div>
<div class="abs" style="left:144.6px;top:92.6px;width:28.8px;height:28.8px;border-radius:50%;background:#e08d22"></div>
<svg class="abs" style="left:151px;top:100px" width="16" height="15" viewBox="0 0 16 15"><rect x="1.7" y="1.8" width="12.6" height="11" rx="1.3" fill="none" stroke="#fff" stroke-width="1.4"/><rect x="1.7" y="1.8" width="12.6" height="2.6" fill="#fff"/></svg>
<svg class="abs" style="left:181px;top:100px" width="15" height="15" viewBox="0 0 15 15"><circle cx="4" cy="4" r="2.85" fill="#f2f2f2"/><circle cx="10.6" cy="4" r="2.85" fill="#f2f2f2"/><circle cx="4" cy="10.6" r="2.85" fill="#f2f2f2"/><circle cx="10.6" cy="10.6" r="2.85" fill="#f2f2f2"/></svg>
<div class="abs" style="left:203px;top:98.5px;width:1px;height:17px;background:#45474a"></div>
<svg class="abs" style="left:210px;top:99px" width="14" height="15" viewBox="0 0 14 15"><path d="M2.5 1v13M7 1v13M11.5 1v13" stroke="#eee" stroke-width="1.2"/><circle cx="2.5" cy="10" r="1.6" fill="#333538" stroke="#eee" stroke-width="1.1"/><circle cx="7" cy="5" r="1.6" fill="#333538" stroke="#eee" stroke-width="1.1"/><circle cx="11.5" cy="10" r="1.6" fill="#333538" stroke="#eee" stroke-width="1.1"/></svg>
<!-- section headers -->
<svg class="abs" style="left:75px;top:152px" width="15" height="12" viewBox="0 0 15 12"><path d="M0.8 6h10.5M7.2 1.8l4.2 4.2-4.2 4.2M12.8 1v10" fill="none" stroke="#6a6c6f" stroke-width="1.2"/></svg>
<div class="sh" style="top:150.6px">SOURCES</div>
<div class="abs" style="left:73px;top:466px;color:#6a6c6f;font-size:11.5px;line-height:14px;font-style:italic;font-family:'Liberation Serif',serif">f<span style="font-style:normal;font-family:'Liberation Sans',sans-serif;font-size:10.5px">(x)</span></div>
<div class="sh" style="top:466.6px">PROCESSORS</div>
<!-- toolbar -->
<div class="abs" style="left:326px;top:40.5px;width:73.7px;height:35.2px;border-radius:17.6px;border:1px solid #343a41"></div>
<div class="abs" style="left:329.8px;top:44.2px;width:32.2px;height:27.8px;border-radius:14px;background:#45484c"></div>
<svg class="abs" style="left:337px;top:49px" width="18" height="18" viewBox="0 0 18 18"><circle cx="4.8" cy="4.8" r="3.6" fill="#f0f0f0"/><circle cx="13.2" cy="4.8" r="3.6" fill="#f0f0f0"/><circle cx="4.8" cy="13.2" r="3.6" fill="#f0f0f0"/><circle cx="13.2" cy="13.2" r="3.6" fill="#f0f0f0"/></svg>
<svg class="abs" style="left:372px;top:49.5px" width="17" height="17" viewBox="0 0 17 17"><path d="M2.5 0.8v15.4M8.5 0.8v15.4M14.5 0.8v15.4" stroke="#ececec" stroke-width="1.3"/><circle cx="2.5" cy="10.5" r="1.9" fill="#222528" stroke="#ececec" stroke-width="1.2"/><circle cx="8.5" cy="5" r="1.9" fill="#222528" stroke="#ececec" stroke-width="1.2"/><circle cx="14.5" cy="10.5" r="1.9" fill="#222528" stroke="#ececec" stroke-width="1.2"/></svg>
<div class="abs" style="left:412.5px;top:50.2px;color:#f4f4f4;font-size:15.2px;font-weight:bold;line-height:18px">Untitled</div>
<div class="abs" style="left:759.4px;top:40.1px;width:270px;height:35.7px;border-radius:18px;background:#24282b;border:1px solid #3a4147"></div>
<svg class="abs" style="left:768px;top:49px" width="17" height="17" viewBox="0 0 17 17"><circle cx="7.9" cy="7.8" r="4.9" fill="none" stroke="#a4a5a7" stroke-width="1.3"/><path d="M11.4 11.3l3.7 3.7" stroke="#a4a5a7" stroke-width="1.5" stroke-linecap="round"/></svg>
<div class="abs" style="left:791px;top:50.6px;color:#9d9ea0;font-size:13.5px;line-height:16px">Search</div>
<div class="led" style="left:1257.3px;top:45.6px"></div><div class="led" style="left:1257.3px;top:54.6px"></div><div class="led" style="left:1257.3px;top:63.5px"></div><div class="led" style="left:1265.3px;top:45.6px"></div><div class="led" style="left:1265.3px;top:54.6px"></div><div class="led" style="left:1265.3px;top:63.5px"></div><div class="led" style="left:1273.4px;top:45.6px"></div><div class="led" style="left:1273.4px;top:54.6px"></div><div class="led" style="left:1273.4px;top:63.5px"></div><div class="led" style="left:1281.4px;top:45.6px"></div><div class="led" style="left:1281.4px;top:54.6px"></div><div class="led" style="left:1281.4px;top:63.5px"></div><div class="led" style="left:1289.4px;top:45.6px"></div><div class="led" style="left:1289.4px;top:54.6px"></div><div class="led" style="left:1289.4px;top:63.5px"></div><div class="led" style="left:1297.5px;top:45.6px"></div><div class="led" style="left:1297.5px;top:54.6px"></div><div class="led" style="left:1297.5px;top:63.5px"></div><div class="led" style="left:1305.5px;top:45.6px"></div><div class="led" style="left:1305.5px;top:54.6px"></div><div class="led" style="left:1305.5px;top:63.5px"></div><div class="led" style="left:1313.5px;top:45.6px"></div><div class="led" style="left:1313.5px;top:54.6px"></div><div class="led" style="left:1313.5px;top:63.5px"></div>
<svg class="abs" style="left:1330.3px;top:44.5px" width="26" height="26" viewBox="0 0 26 26"><path d="M7.3 20.2A9.9 9.9 0 1 1 19.9 20.2" fill="none" stroke="#3d4043" stroke-width="2.7" stroke-linecap="round"/></svg>
<div class="abs" style="left:1371.5px;top:40.3px;width:81.2px;height:35.3px;border-radius:17.7px;border:1px solid #36404a"></div>
<div class="abs" style="left:1382.9px;top:51.5px;width:13.6px;height:13.5px;border-radius:2.5px;background:#ebebeb"></div>
<div class="abs" style="left:1409.5px;top:43.4px;width:38.9px;height:29.1px;border-radius:14.5px;background:#4c3d2b"></div>
<svg class="abs" style="left:1420px;top:49px" width="20" height="18" viewBox="0 0 20 18"><path d="M3.3 2.3Q3 1.4 3.9 1.8L15.6 8.3Q16.3 8.8 15.6 9.3L3.9 15.9Q3 16.3 3.1 15.4Z" fill="#ebebeb"/></svg>
<!-- breadcrumb -->
<svg class="abs" style="left:324px;top:93px" width="36" height="16" viewBox="0 0 36 16"><path d="M9.5 2.5L3.5 8l6 5.5M22.5 2.5l6 5.5-6 5.5" fill="none" stroke="#8a8b8d" stroke-width="1.2"/></svg>
<div class="abs" style="left:362.3px;top:92.4px;width:1px;height:15.5px;background:#34363a"></div>
<svg class="abs" style="left:371px;top:94px" width="13" height="12" viewBox="0 0 13 12"><rect x="1" y="1.2" width="11" height="9.8" rx="1.5" fill="none" stroke="#8f9093" stroke-width="1.2"/><rect x="1" y="1.2" width="11" height="2.4" fill="#8f9093"/></svg>
<div class="abs" style="left:391.5px;top:93.5px;color:#e2e2e2;font-size:11.4px;line-height:13px">Bench</div>
<!-- right panel -->
<div class="abs" style="left:1682.3px;top:39.9px;width:39.5px;height:36px;border-radius:18px;border:1px solid #38393b"></div>
<svg class="abs" style="left:1690px;top:48px" width="24" height="21" viewBox="0 0 24 21"><rect x="3.2" y="3.5" width="18.2" height="14.2" rx="2.6" fill="none" stroke="#e2e2e2" stroke-width="1.6"/><path d="M14.8 3.6v14" stroke="#e2e2e2" stroke-width="1.5"/><path d="M17 6.6h1.8M17 9.2h1.8M17 11.6h1.8" stroke="#e2e2e2" stroke-width="1"/></svg>
<svg class="abs" style="left:1580px;top:447px" width="40" height="40" viewBox="0 0 40 40"><g fill="none" stroke="#77787a" stroke-width="2.2"><circle cx="11.2" cy="11.1" r="6.6"/><circle cx="29.1" cy="11.1" r="6.6"/><circle cx="11.2" cy="28.7" r="6.6"/><circle cx="29.1" cy="28.7" r="6.6"/></g></svg>
<div class="abs" style="left:1470px;top:509px;width:259px;text-align:center;color:#a2a3a5;font-size:26px;font-weight:bold;line-height:31.6px">No Modules<br>Selected</div>
<div id="frame"></div>
</body></html>
